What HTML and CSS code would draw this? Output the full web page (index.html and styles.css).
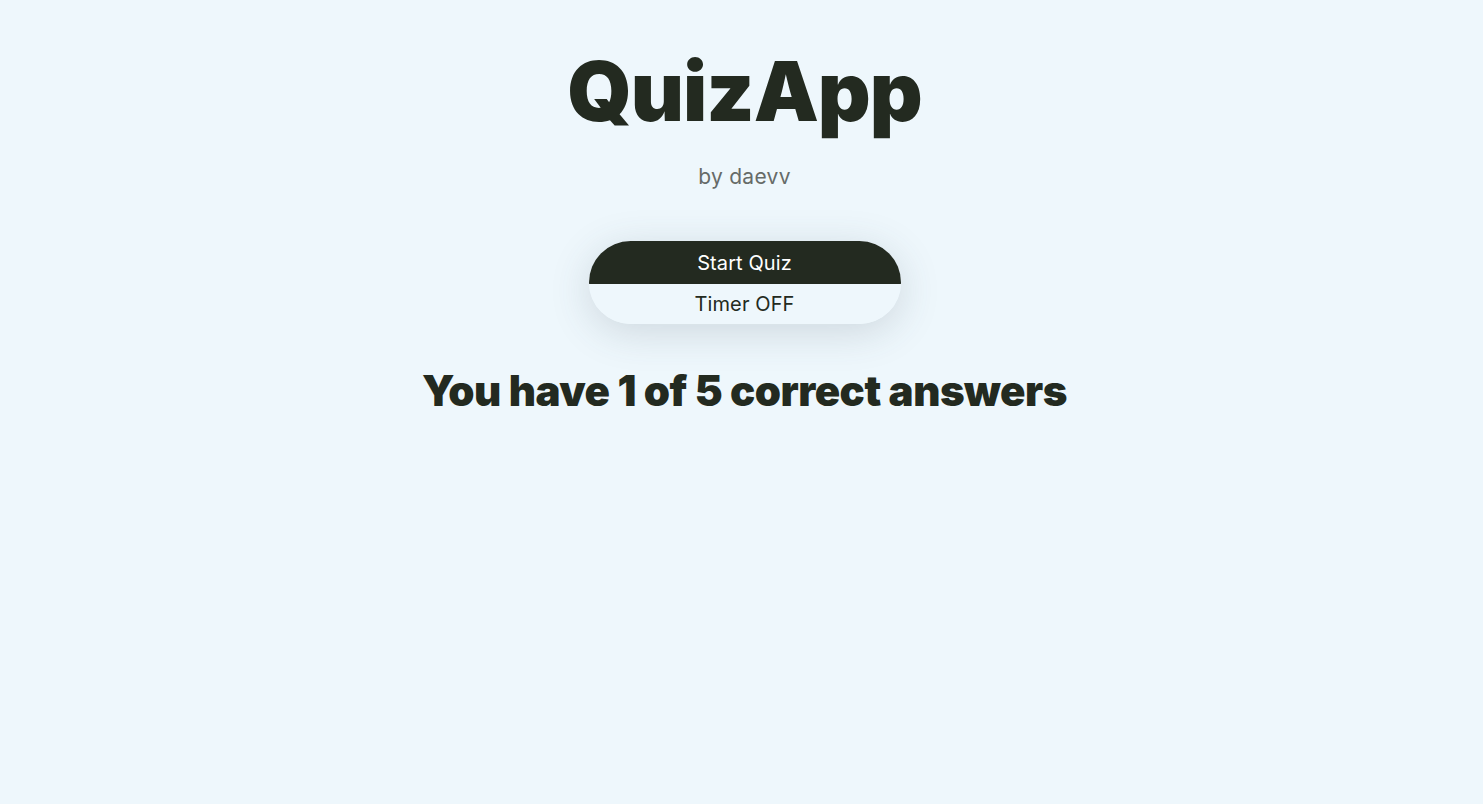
FILE: index.html
```html
<!DOCTYPE html>
<html lang="en">
<head>
<meta charset="utf-8">
<title>QuizApp</title>
<link rel="stylesheet" href="styles.css">
</head>
<body>
<main class="app">
  <header class="header">
    <h1 class="title">QuizApp</h1>
    <p class="author">by daevv</p>
  </header>
  <div class="controls">
    <button class="btn btn-start">Start Quiz</button>
    <button class="btn btn-timer">Timer OFF</button>
  </div>
  <h2 class="result">You have 1 of 5 correct answers</h2>
</main>
</body>
</html>
```
FILE: styles.css
```css
html, body {
  margin: 0;
  padding: 0;
  background: #eef7fc;
  height: 100%;
}
body {
  font-family: "Inter", "Lato", "Noto Sans", sans-serif;
  color: #232a20;
}
.app {
  display: flex;
  flex-direction: column;
  align-items: center;
  padding-top: 43px;
}
.header {
  display: flex;
  flex-direction: column;
  align-items: center;
}
.title {
  margin: 0;
  font-size: 82px;
  font-weight: 900;
  line-height: 1.2;
  letter-spacing: -1px;
  padding-left: 6px;
}
.author {
  margin: 23px 0 0;
  font-size: 21px;
  font-weight: 400;
  letter-spacing: 0.3px;
  color: #666b68;
  padding-left: 6px;
}
.controls {
  margin-top: 52px;
  width: 312px;
  display: flex;
  flex-direction: column;
  border-radius: 42px;
  overflow: hidden;
  box-shadow: 0 8px 40px rgba(60, 80, 90, 0.18);
  margin-left: 6px;
}
.btn {
  border: none;
  font-family: inherit;
  font-size: 20px;
  letter-spacing: 0.1px;
  cursor: pointer;
}
.btn-start {
  height: 43px;
  background: #232a20;
  color: #ffffff;
  padding-top: 2px;
}
.btn-timer {
  height: 40px;
  background: #eef7fc;
  color: #232a20;
}
.result {
  margin: 41px 0 0;
  font-size: 42px;
  font-weight: 900;
  letter-spacing: -0.5px;
  padding-left: 6px;
}
```
